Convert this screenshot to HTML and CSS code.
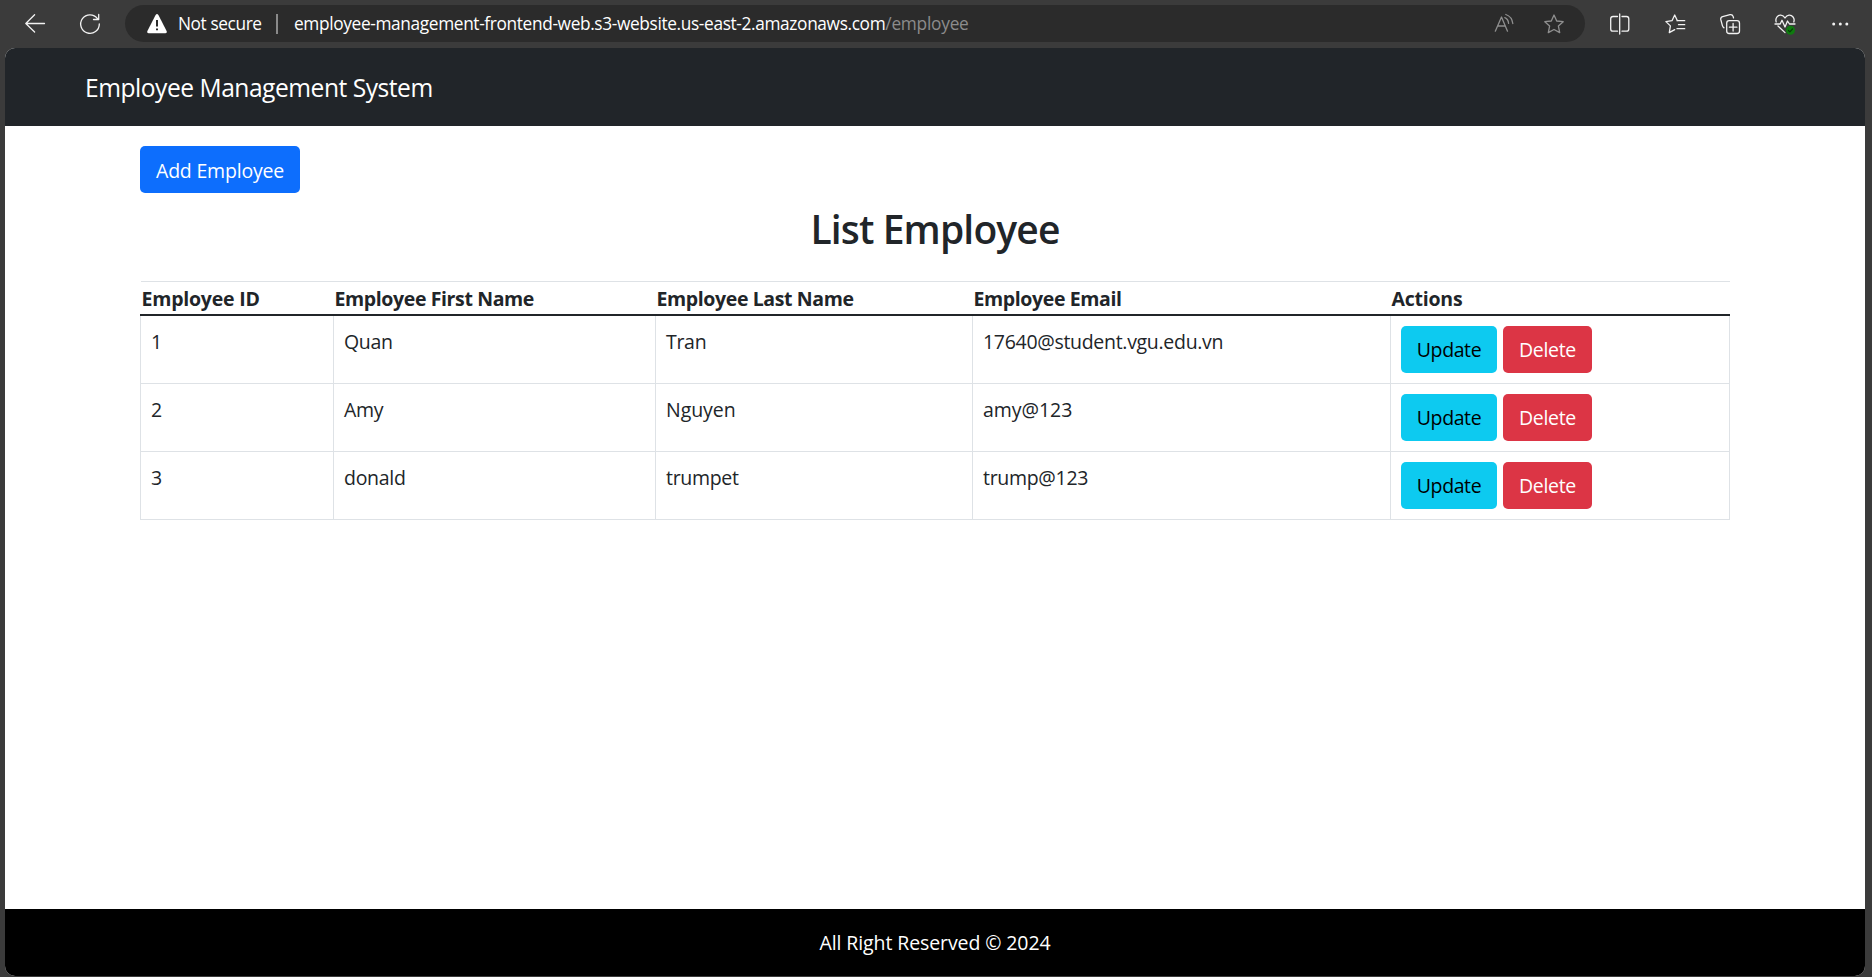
FILE: index.html
```html
<!DOCTYPE html>
<html lang="en">
<head>
<meta charset="utf-8">
<title>Employee Management System</title>
<link rel="stylesheet" href="styles.css">
</head>
<body>
<div class="browser">
  <div class="toolbar">
    <svg class="icon" viewBox="0 0 20 20"><path d="M19.5 9.5H.8M9.6.8.8 9.5l8.800 8.500"/></svg>
    <svg class="icon reload" viewBox="0 0 20 20"><path d="M19.3 10A9.300 9.300 0 1 1 17.500 4.600M18.700.5V5.500H13.500"/></svg>
    <div class="address">
      <svg class="icon warning" viewBox="0 0 20 20"><path d="M8.600 1Q10-.8 11.400 1L19.600 17Q20.400 19 18.300 19.200H1.700Q-.4 19 .4 17Z"/><path class="mark" d="M10 6v6.500M10 14.400v1.800"/></svg>
      <span class="insecure">Not secure</span>
      <span class="divider"></span>
      <span class="url"><span class="host">employee-management-frontend-web.s3-website.us-east-2.amazonaws.com</span><span class="path">/employee</span></span>
      <svg class="icon dim" viewBox="0 0 20 20"><path d="M1.300 17.200 7.500 3l6 14.200M3.600 12h7.700M10.800 3.600q3.400 1.300 3.800 5.800M11.800.5q6.200 2.100 7 9"/></svg>
      <svg class="icon dim" viewBox="0 0 20 20"><path d="m10 1 2.700 6 6.500.700-4.800 4.400 1.300 6.500L10 15.500l-5.700 3.100 1.300-6.500L.8 7.700 7.300 7Z"/></svg>
    </div>
    <svg class="icon" viewBox="0 0 20 20"><path d="M7.500 2.500H3Q.7 2.500.7 4.800V15Q.7 17.200 3 17.200H7.500M12 2.500h4.500q2.300 0 2.300 2.300V15q0 2.200-2.300 2.200H12M9.700 0v20"/></svg>
    <svg class="icon" viewBox="0 0 20 20"><path d="M12.400 6.700 9.700 1 7 6.700.9 7.600l4.500 4.300-1.100 6.700 5.400-3M12 6.700h7.700M13.500 10.700h6.200M12 14.700h7.700"/></svg>
    <svg class="icon" viewBox="0 0 20 20"><rect x="6.700" y="6.700" width="12.800" height="12.800" rx="2.500"/><path d="M13.100 9.500v7.500M9.400 13.200h7.500M4 13.800Q2.800 13.200 2.400 11.700L.8 5.700Q.3 3.300 2.600 2.600L10 .7q2.400-.5 3.200 1.900l.3 1.200"/></svg>
    <svg class="icon health" viewBox="0 0 20 20"><path d="M1.200 8C-.2 3.600 3.200.8 6 1.200q2.500.2 4 2.800Q11.500 1.400 14 1.200c3-.3 6.200 2.800 4.800 6.800M0 10h5.200L7 6.300l3 6.700 2.500-6L14.500 10H20M3 12l7 6.600"/><circle class="badge" cx="15.500" cy="16.300" r="4.500"/><path class="tick" d="m13.500 16.500 1.400 1.400 2.600-2.900"/></svg>
    <svg class="icon dots" viewBox="0 0 20 20"><circle cx="3.700" cy="10" r="1.500"/><circle cx="10.300" cy="10" r="1.500"/><circle cx="16.800" cy="10" r="1.500"/></svg>
  </div>
  <div class="page">
    <header class="navbar"><span class="brand">Employee Management System</span></header>
    <main class="container">
      <button class="btn primary">Add Employee</button>
      <h2>List Employee</h2>
      <table>
        <colgroup><col class="c-id"><col class="c-first"><col class="c-last"><col class="c-email"><col class="c-act"></colgroup>
        <thead><tr><th class="short">Employee ID</th><th>Employee First Name</th><th>Employee Last Name</th><th>Employee Email</th><th class="short">Actions</th></tr></thead>
        <tbody>
          <tr><td>1</td><td>Quan</td><td>Tran</td><td>17640@student.vgu.edu.vn</td><td><div class="actions"><button class="btn info">Update</button><button class="btn danger">Delete</button></div></td></tr>
          <tr><td>2</td><td>Amy</td><td class="loose">Nguyen</td><td class="loose">amy@123</td><td><div class="actions"><button class="btn info">Update</button><button class="btn danger">Delete</button></div></td></tr>
          <tr><td>3</td><td>donald</td><td>trumpet</td><td>trump@123</td><td><div class="actions"><button class="btn info">Update</button><button class="btn danger">Delete</button></div></td></tr>
        </tbody>
      </table>
    </main>
    <footer class="footer">All Right Reserved © 2024</footer>
  </div>
</div>
</body>
</html>
```
FILE: styles.css
```css
* { box-sizing: border-box; }
body { margin: 0; background: #3b3b3b; font-family: "Open Sans", "Noto Sans", sans-serif; font-size: 19.5px; line-height: 30px; color: #212529; }
.browser { width: 1872px; height: 977px; display: flex; flex-direction: column; overflow: hidden; }
.toolbar { height: 48px; flex: none; display: flex; align-items: center; gap: 35px; padding: 0 22px 0 25px; }
.icon { width: 20px; height: 20px; flex: none; display: block; overflow: visible; fill: none; stroke: #f2f2f2; stroke-width: 1.3; stroke-linecap: round; stroke-linejoin: round; }
.reload { margin-right: -10px; }
.address { flex: 1; height: 37px; margin: 0 -10px 1px 0; padding: 0 21px 0 22px; border-radius: 19px; background: #2b2b2b; display: flex; align-items: center; font-size: 17.3px; line-height: 37px; white-space: nowrap; color: #fff; }
.warning { fill: #fff; stroke: none; margin-right: 11px; }
.warning .mark { stroke: #2b2b2b; stroke-width: 2; stroke-linecap: butt; }
.insecure { width: 83px; letter-spacing: -0.4px; }
.divider { width: 2px; height: 20px; background: #8a8a8a; margin: 0 16px 0 15px; }
.url { flex: 1; }
.host { letter-spacing: -0.36px; }
.path { color: #8c8c8c; letter-spacing: -0.24px; }
.dim { stroke: #8f8f8f; }
.dim + .dim { margin-left: 30px; }
.badge { fill: #0f7b0f; stroke: none; }
.tick { stroke: #063f06; stroke-width: 1.2; }
.dots { fill: #f2f2f2; stroke: none; }
.page { flex: 1; margin: 0 7px 1px 5px; border-radius: 10px; overflow: hidden; background: #fff; display: flex; flex-direction: column; }
.navbar { height: 78px; flex: none; background: #212529; color: #fff; padding: 1px 80px 0; font-size: 24.6px; line-height: 78px; letter-spacing: -0.48px; white-space: nowrap; }
.container { flex: 1; width: 1590px; margin-left: 135px; padding-top: 20px; }
.btn { display: flex; align-items: center; justify-content: center; height: 47px; border: 0; border-radius: 5px; padding: 1px 0 0; font: inherit; line-height: 31px; white-space: nowrap; color: #fff; }
.primary { width: 160px; background: #0d6efd; letter-spacing: -0.2px; }
.info { width: 96px; background: #0dcaf0; color: #000; letter-spacing: -0.4px; }
.danger { width: 89px; background: #dc3545; letter-spacing: -0.3px; }
.actions { display: flex; gap: 6px; }
h2 { margin: 11px 0 27px; font-size: 39px; line-height: 50px; font-weight: 600; letter-spacing: -0.87px; text-align: center; }
table { width: 1590px; table-layout: fixed; border-collapse: collapse; }
.c-id { width: 193px; } .c-first { width: 322px; } .c-last { width: 317px; } .c-email { width: 418px; }
th { height: 33px; padding: 2px 1px 0; line-height: 29px; text-align: left; font-weight: 700; letter-spacing: -0.38px; border-top: 1px solid #dee2e6; white-space: nowrap; }
th.short { letter-spacing: -0.22px; }
td { height: 68px; padding: 10px; vertical-align: top; line-height: 31px; letter-spacing: -0.3px; border: 1px solid #dee2e6; white-space: nowrap; }
td.loose { letter-spacing: -0.05px; }
thead { border-bottom: 2px solid #212529; }
.footer { height: 67px; flex: none; background: #000; color: #fff; text-align: center; line-height: 67px; letter-spacing: -0.1px; }
```
